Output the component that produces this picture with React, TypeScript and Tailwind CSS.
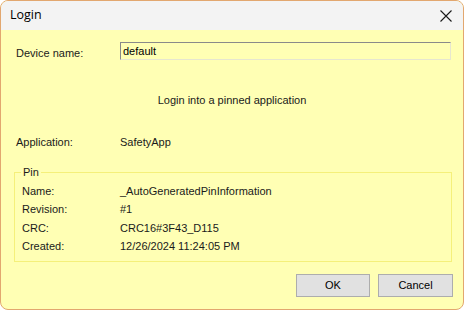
import React from "react";

const font = { fontFamily: "'Liberation Sans', Arial, sans-serif" };

function Row({ label, value }: { label: string; value: string }) {
  return (
    <div className="flex items-center h-[18.4px] pl-[7px]">
      <span className="w-[98px] shrink-0">{label}</span>
      <span>{value}</span>
    </div>
  );
}

export default function App() {
  return (
    <div className="w-[465px] h-[311px] bg-white" style={font}>
      <div className="w-[464px] h-[310px] border border-[#e2a76f] rounded-[8px] overflow-hidden flex flex-col bg-[#ffffb4]">
        <div className="h-[29px] bg-[#f3f3f3] flex items-center justify-between pl-[9px] pr-[11px] shrink-0">
          <span className="text-[12.5px] text-black" style={{ fontFamily: "'Open Sans', 'Noto Sans', sans-serif" }}>Login</span>
          <svg width="12" height="12" viewBox="0 0 12 12">
            <path d="M0.5 0.5 L11.5 11.5 M11.5 0.5 L0.5 11.5" stroke="#1a1a1a" strokeWidth="1.1" />
          </svg>
        </div>
        <div className="flex-1 flex flex-col text-[11px] text-[#1a1a1a] relative">
          <div className="flex items-center pl-[15px] mt-[12px] h-[18px]">
            <span className="w-[104px] shrink-0 pt-[4px]">Device name:</span>
            <div className="w-[331px] h-[18px] border border-t-[#8a8a8a] border-l-[#8a8a8a] border-r-[#e6e6d0] border-b-[#e6e6d0] flex items-center pl-[2px] text-black">
              default
            </div>
          </div>
          <div className="text-center mt-[31px] h-[18px] leading-[18px]">Login into a pinned application</div>
          <div className="mt-[24px] pl-[15px] flex items-center h-[18px]">
            <span className="w-[104px] shrink-0">Application:</span>
            <span>SafetyApp</span>
          </div>
          <div className="mt-[21px] ml-[13px] w-[438px] h-[90px] border border-[#f5f07a] relative pt-[9px]">
            <span className="absolute left-[6px] top-[-8px] px-[2px] bg-[#ffffb4] leading-[14px]">Pin</span>
            <Row label="Name:" value="_AutoGeneratedPinInformation" />
            <Row label="Revision:" value="#1" />
            <Row label="CRC:" value="CRC16#3F43_D115" />
            <Row label="Created:" value="12/26/2024 11:24:05 PM" />
          </div>
          <div className="flex justify-end gap-[8px] mt-[12px] pr-[10px]">
            <button className="w-[74px] h-[23px] bg-[#e1e1e1] border border-[#adadad] text-[11px] text-black">OK</button>
            <button className="w-[75px] h-[23px] bg-[#e1e1e1] border border-[#adadad] text-[11px] text-black">Cancel</button>
          </div>
        </div>
      </div>
    </div>
  );
}
